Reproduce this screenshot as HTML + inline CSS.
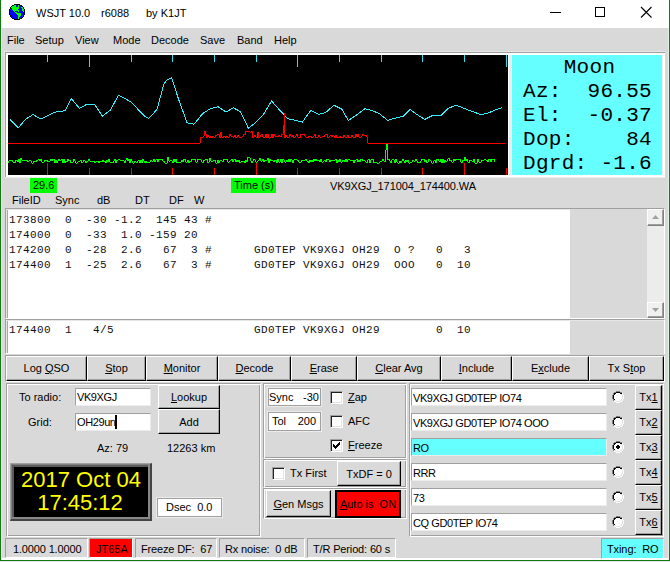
<!DOCTYPE html>
<html><head><meta charset="utf-8">
<style>
*{box-sizing:border-box;margin:0;padding:0}
html,body{width:670px;height:562px;overflow:hidden;background:#d9d9d9;font-family:"Liberation Sans",sans-serif;font-size:11px;color:#000}
.a{position:absolute}
.t{position:absolute;white-space:pre;line-height:11px;font-size:11px}
.m{position:absolute;white-space:pre;font-family:"Liberation Mono",monospace;font-size:11px;line-height:12px;letter-spacing:0.4px;color:#101010}
.sunk{position:absolute;background:#fff;border-top:1px solid #a0a0a0;border-left:1px solid #a0a0a0;border-right:1px solid #fff;border-bottom:1px solid #fff;box-shadow:inset 1px 1px 0 #e6e6e6, inset 2px 0 0 #a8a8a8}
.btn{position:absolute;background:#d9d9d9;border-top:1px solid #fff;border-left:1px solid #fff;border-right:1px solid #000;border-bottom:1px solid #000;box-shadow:inset -1px -1px 0 #a0a0a0;text-align:center;font-size:11px;white-space:pre}
.grp{position:absolute;border-top:1px solid #a0a0a0;border-left:1px solid #a0a0a0;border-right:1px solid #fff;border-bottom:1px solid #fff;box-shadow:inset 1px 1px 0 #fff,inset -1px -1px 0 #a0a0a0}
.edit{position:absolute;background:#fff;border-top:1px solid #a0a0a0;border-left:1px solid #a0a0a0;border-right:1px solid #ececec;border-bottom:1px solid #ececec;font-size:11px;white-space:pre}
.cb{position:absolute;width:13px;height:13px;background:#fff;border-top:1px solid #a0a0a0;border-left:1px solid #a0a0a0;border-right:1px solid #fff;border-bottom:1px solid #fff;box-shadow:inset 1px 1px 0 #202020, inset -1px -1px 0 #e3e3e3}
.rb{position:absolute;width:12px;height:12px;border-radius:50%;background:#fff;border:1px solid #808080;border-right-color:#fff;border-bottom-color:#fff}
.sp{position:absolute;height:20px;top:538px;border:1px solid #a0a0a0;border-right-color:#fff;border-bottom-color:#fff}
u{text-decoration:underline}
</style></head><body>
<!-- window border -->
<div class="a" style="left:0;top:0;width:1px;height:561px;background:#107c10"></div>
<div class="a" style="left:669px;top:0;width:1px;height:561px;background:#107c10"></div>
<div class="a" style="left:0;top:560px;width:670px;height:1px;background:#107c10"></div>
<div class="a" style="left:0;top:561px;width:670px;height:1px;background:#e4e4e4"></div>
<div class="a" style="left:1px;top:28px;width:1px;height:532px;background:#ebebeb"></div>
<div class="a" style="left:668px;top:28px;width:1px;height:532px;background:#ebebeb"></div>
<!-- title bar -->
<div class="a" style="left:1px;top:0;width:668px;height:28px;background:#fff"></div>
<svg class="a" style="left:9px;top:4px" width="16" height="16" shape-rendering="crispEdges"><rect x="5" y="0" width="1" height="1" fill="#000"/><rect x="6" y="0" width="1" height="1" fill="#000"/><rect x="7" y="0" width="1" height="1" fill="#000"/><rect x="8" y="0" width="1" height="1" fill="#000"/><rect x="9" y="0" width="1" height="1" fill="#000"/><rect x="10" y="0" width="1" height="1" fill="#000"/><rect x="3" y="1" width="1" height="1" fill="#000"/><rect x="4" y="1" width="1" height="1" fill="#000"/><rect x="5" y="1" width="1" height="1" fill="#00ff00"/><rect x="6" y="1" width="1" height="1" fill="#00ff00"/><rect x="7" y="1" width="1" height="1" fill="#0000ff"/><rect x="8" y="1" width="1" height="1" fill="#0000ff"/><rect x="9" y="1" width="1" height="1" fill="#00ff00"/><rect x="10" y="1" width="1" height="1" fill="#0000ff"/><rect x="11" y="1" width="1" height="1" fill="#000"/><rect x="12" y="1" width="1" height="1" fill="#000"/><rect x="2" y="2" width="1" height="1" fill="#000"/><rect x="3" y="2" width="1" height="1" fill="#00ff00"/><rect x="4" y="2" width="1" height="1" fill="#00ff00"/><rect x="5" y="2" width="1" height="1" fill="#00ff00"/><rect x="6" y="2" width="1" height="1" fill="#00ff00"/><rect x="7" y="2" width="1" height="1" fill="#0000ff"/><rect x="8" y="2" width="1" height="1" fill="#0000ff"/><rect x="9" y="2" width="1" height="1" fill="#00ff00"/><rect x="10" y="2" width="1" height="1" fill="#0000ff"/><rect x="11" y="2" width="1" height="1" fill="#0000ff"/><rect x="12" y="2" width="1" height="1" fill="#0000ff"/><rect x="13" y="2" width="1" height="1" fill="#000"/><rect x="1" y="3" width="1" height="1" fill="#000"/><rect x="2" y="3" width="1" height="1" fill="#00ff00"/><rect x="3" y="3" width="1" height="1" fill="#00ff00"/><rect x="4" y="3" width="1" height="1" fill="#00ff00"/><rect x="5" y="3" width="1" height="1" fill="#00ff00"/><rect x="6" y="3" width="1" height="1" fill="#00ff00"/><rect x="7" y="3" width="1" height="1" fill="#00ff00"/><rect x="8" y="3" width="1" height="1" fill="#00ff00"/><rect x="9" y="3" width="1" height="1" fill="#00ff00"/><rect x="10" y="3" width="1" height="1" fill="#0000ff"/><rect x="11" y="3" width="1" height="1" fill="#0000ff"/><rect x="12" y="3" width="1" height="1" fill="#00ff00"/><rect x="13" y="3" width="1" height="1" fill="#00ff00"/><rect x="14" y="3" width="1" height="1" fill="#000"/><rect x="1" y="4" width="1" height="1" fill="#000"/><rect x="2" y="4" width="1" height="1" fill="#0000ff"/><rect x="3" y="4" width="1" height="1" fill="#00ff00"/><rect x="4" y="4" width="1" height="1" fill="#00ff00"/><rect x="5" y="4" width="1" height="1" fill="#00ff00"/><rect x="6" y="4" width="1" height="1" fill="#00ff00"/><rect x="7" y="4" width="1" height="1" fill="#00ff00"/><rect x="8" y="4" width="1" height="1" fill="#00ff00"/><rect x="9" y="4" width="1" height="1" fill="#00ff00"/><rect x="10" y="4" width="1" height="1" fill="#0000ff"/><rect x="11" y="4" width="1" height="1" fill="#0000ff"/><rect x="12" y="4" width="1" height="1" fill="#0000ff"/><rect x="13" y="4" width="1" height="1" fill="#00ff00"/><rect x="14" y="4" width="1" height="1" fill="#000"/><rect x="0" y="5" width="1" height="1" fill="#000"/><rect x="1" y="5" width="1" height="1" fill="#0000ff"/><rect x="2" y="5" width="1" height="1" fill="#0000ff"/><rect x="3" y="5" width="1" height="1" fill="#00ff00"/><rect x="4" y="5" width="1" height="1" fill="#00ff00"/><rect x="5" y="5" width="1" height="1" fill="#00ff00"/><rect x="6" y="5" width="1" height="1" fill="#00ff00"/><rect x="7" y="5" width="1" height="1" fill="#00ff00"/><rect x="8" y="5" width="1" height="1" fill="#00ff00"/><rect x="9" y="5" width="1" height="1" fill="#0000ff"/><rect x="10" y="5" width="1" height="1" fill="#0000ff"/><rect x="11" y="5" width="1" height="1" fill="#0000ff"/><rect x="12" y="5" width="1" height="1" fill="#0000ff"/><rect x="13" y="5" width="1" height="1" fill="#00ff00"/><rect x="14" y="5" width="1" height="1" fill="#00ff00"/><rect x="15" y="5" width="1" height="1" fill="#000"/><rect x="0" y="6" width="1" height="1" fill="#000"/><rect x="1" y="6" width="1" height="1" fill="#0000ff"/><rect x="2" y="6" width="1" height="1" fill="#0000ff"/><rect x="3" y="6" width="1" height="1" fill="#0000ff"/><rect x="4" y="6" width="1" height="1" fill="#00ff00"/><rect x="5" y="6" width="1" height="1" fill="#00ff00"/><rect x="6" y="6" width="1" height="1" fill="#00ff00"/><rect x="7" y="6" width="1" height="1" fill="#00ff00"/><rect x="8" y="6" width="1" height="1" fill="#00ff00"/><rect x="9" y="6" width="1" height="1" fill="#00ff00"/><rect x="10" y="6" width="1" height="1" fill="#0000ff"/><rect x="11" y="6" width="1" height="1" fill="#0000ff"/><rect x="12" y="6" width="1" height="1" fill="#0000ff"/><rect x="13" y="6" width="1" height="1" fill="#00ff00"/><rect x="14" y="6" width="1" height="1" fill="#00ff00"/><rect x="15" y="6" width="1" height="1" fill="#000"/><rect x="0" y="7" width="1" height="1" fill="#000"/><rect x="1" y="7" width="1" height="1" fill="#0000ff"/><rect x="2" y="7" width="1" height="1" fill="#0000ff"/><rect x="3" y="7" width="1" height="1" fill="#0000ff"/><rect x="4" y="7" width="1" height="1" fill="#0000ff"/><rect x="5" y="7" width="1" height="1" fill="#00ff00"/><rect x="6" y="7" width="1" height="1" fill="#0000ff"/><rect x="7" y="7" width="1" height="1" fill="#0000ff"/><rect x="8" y="7" width="1" height="1" fill="#0000ff"/><rect x="9" y="7" width="1" height="1" fill="#00ff00"/><rect x="10" y="7" width="1" height="1" fill="#0000ff"/><rect x="11" y="7" width="1" height="1" fill="#0000ff"/><rect x="12" y="7" width="1" height="1" fill="#0000ff"/><rect x="13" y="7" width="1" height="1" fill="#0000ff"/><rect x="14" y="7" width="1" height="1" fill="#00ff00"/><rect x="15" y="7" width="1" height="1" fill="#000"/><rect x="0" y="8" width="1" height="1" fill="#000"/><rect x="1" y="8" width="1" height="1" fill="#0000ff"/><rect x="2" y="8" width="1" height="1" fill="#0000ff"/><rect x="3" y="8" width="1" height="1" fill="#0000ff"/><rect x="4" y="8" width="1" height="1" fill="#0000ff"/><rect x="5" y="8" width="1" height="1" fill="#0000ff"/><rect x="6" y="8" width="1" height="1" fill="#00ff00"/><rect x="7" y="8" width="1" height="1" fill="#00ff00"/><rect x="8" y="8" width="1" height="1" fill="#0000ff"/><rect x="9" y="8" width="1" height="1" fill="#0000ff"/><rect x="10" y="8" width="1" height="1" fill="#0000ff"/><rect x="11" y="8" width="1" height="1" fill="#0000ff"/><rect x="12" y="8" width="1" height="1" fill="#0000ff"/><rect x="13" y="8" width="1" height="1" fill="#0000ff"/><rect x="14" y="8" width="1" height="1" fill="#0000ff"/><rect x="15" y="8" width="1" height="1" fill="#000"/><rect x="0" y="9" width="1" height="1" fill="#000"/><rect x="1" y="9" width="1" height="1" fill="#0000ff"/><rect x="2" y="9" width="1" height="1" fill="#0000ff"/><rect x="3" y="9" width="1" height="1" fill="#0000ff"/><rect x="4" y="9" width="1" height="1" fill="#0000ff"/><rect x="5" y="9" width="1" height="1" fill="#0000ff"/><rect x="6" y="9" width="1" height="1" fill="#0000ff"/><rect x="7" y="9" width="1" height="1" fill="#00ff00"/><rect x="8" y="9" width="1" height="1" fill="#00ff00"/><rect x="9" y="9" width="1" height="1" fill="#00ff00"/><rect x="10" y="9" width="1" height="1" fill="#00ff00"/><rect x="11" y="9" width="1" height="1" fill="#00ff00"/><rect x="12" y="9" width="1" height="1" fill="#0000ff"/><rect x="13" y="9" width="1" height="1" fill="#0000ff"/><rect x="14" y="9" width="1" height="1" fill="#0000ff"/><rect x="15" y="9" width="1" height="1" fill="#000"/><rect x="0" y="10" width="1" height="1" fill="#000"/><rect x="1" y="10" width="1" height="1" fill="#0000ff"/><rect x="2" y="10" width="1" height="1" fill="#0000ff"/><rect x="3" y="10" width="1" height="1" fill="#0000ff"/><rect x="4" y="10" width="1" height="1" fill="#0000ff"/><rect x="5" y="10" width="1" height="1" fill="#0000ff"/><rect x="6" y="10" width="1" height="1" fill="#0000ff"/><rect x="7" y="10" width="1" height="1" fill="#0000ff"/><rect x="8" y="10" width="1" height="1" fill="#00ff00"/><rect x="9" y="10" width="1" height="1" fill="#00ff00"/><rect x="10" y="10" width="1" height="1" fill="#00ff00"/><rect x="11" y="10" width="1" height="1" fill="#00ff00"/><rect x="12" y="10" width="1" height="1" fill="#0000ff"/><rect x="13" y="10" width="1" height="1" fill="#0000ff"/><rect x="14" y="10" width="1" height="1" fill="#0000ff"/><rect x="15" y="10" width="1" height="1" fill="#000"/><rect x="1" y="11" width="1" height="1" fill="#000"/><rect x="2" y="11" width="1" height="1" fill="#0000ff"/><rect x="3" y="11" width="1" height="1" fill="#0000ff"/><rect x="4" y="11" width="1" height="1" fill="#0000ff"/><rect x="5" y="11" width="1" height="1" fill="#0000ff"/><rect x="6" y="11" width="1" height="1" fill="#0000ff"/><rect x="7" y="11" width="1" height="1" fill="#0000ff"/><rect x="8" y="11" width="1" height="1" fill="#0000ff"/><rect x="9" y="11" width="1" height="1" fill="#00ff00"/><rect x="10" y="11" width="1" height="1" fill="#00ff00"/><rect x="11" y="11" width="1" height="1" fill="#00ff00"/><rect x="12" y="11" width="1" height="1" fill="#0000ff"/><rect x="13" y="11" width="1" height="1" fill="#0000ff"/><rect x="14" y="11" width="1" height="1" fill="#000"/><rect x="1" y="12" width="1" height="1" fill="#000"/><rect x="2" y="12" width="1" height="1" fill="#0000ff"/><rect x="3" y="12" width="1" height="1" fill="#0000ff"/><rect x="4" y="12" width="1" height="1" fill="#0000ff"/><rect x="5" y="12" width="1" height="1" fill="#0000ff"/><rect x="6" y="12" width="1" height="1" fill="#0000ff"/><rect x="7" y="12" width="1" height="1" fill="#0000ff"/><rect x="8" y="12" width="1" height="1" fill="#0000ff"/><rect x="9" y="12" width="1" height="1" fill="#00ff00"/><rect x="10" y="12" width="1" height="1" fill="#00ff00"/><rect x="11" y="12" width="1" height="1" fill="#0000ff"/><rect x="12" y="12" width="1" height="1" fill="#0000ff"/><rect x="13" y="12" width="1" height="1" fill="#0000ff"/><rect x="14" y="12" width="1" height="1" fill="#000"/><rect x="2" y="13" width="1" height="1" fill="#000"/><rect x="3" y="13" width="1" height="1" fill="#0000ff"/><rect x="4" y="13" width="1" height="1" fill="#0000ff"/><rect x="5" y="13" width="1" height="1" fill="#0000ff"/><rect x="6" y="13" width="1" height="1" fill="#0000ff"/><rect x="7" y="13" width="1" height="1" fill="#0000ff"/><rect x="8" y="13" width="1" height="1" fill="#0000ff"/><rect x="9" y="13" width="1" height="1" fill="#00ff00"/><rect x="10" y="13" width="1" height="1" fill="#0000ff"/><rect x="11" y="13" width="1" height="1" fill="#0000ff"/><rect x="12" y="13" width="1" height="1" fill="#0000ff"/><rect x="13" y="13" width="1" height="1" fill="#000"/><rect x="3" y="14" width="1" height="1" fill="#000"/><rect x="4" y="14" width="1" height="1" fill="#000"/><rect x="5" y="14" width="1" height="1" fill="#0000ff"/><rect x="6" y="14" width="1" height="1" fill="#0000ff"/><rect x="7" y="14" width="1" height="1" fill="#0000ff"/><rect x="8" y="14" width="1" height="1" fill="#0000ff"/><rect x="9" y="14" width="1" height="1" fill="#00ff00"/><rect x="10" y="14" width="1" height="1" fill="#0000ff"/><rect x="11" y="14" width="1" height="1" fill="#000"/><rect x="12" y="14" width="1" height="1" fill="#000"/><rect x="5" y="15" width="1" height="1" fill="#000"/><rect x="6" y="15" width="1" height="1" fill="#000"/><rect x="7" y="15" width="1" height="1" fill="#000"/><rect x="8" y="15" width="1" height="1" fill="#000"/><rect x="9" y="15" width="1" height="1" fill="#000"/><rect x="10" y="15" width="1" height="1" fill="#000"/></svg>
<div class="t" style="left:36px;top:8px">WSJT 10.0</div>
<div class="t" style="left:101px;top:8px">r6088</div>
<div class="t" style="left:146px;top:8px">by K1JT</div>
<div class="a" style="left:550px;top:12px;width:11px;height:1px;background:#000"></div>
<div class="a" style="left:595px;top:7px;width:10px;height:10px;border:1px solid #000"></div>
<svg class="a" style="left:640px;top:6px" width="13" height="13"><path d="M1,1 L11.5,11.5 M11.5,1 L1,11.5" stroke="#000" stroke-width="1.1"/></svg>
<!-- menu -->
<div class="t" style="left:7px;top:35px">File</div>
<div class="t" style="left:35px;top:35px">Setup</div>
<div class="t" style="left:75px;top:35px">View</div>
<div class="t" style="left:113px;top:35px">Mode</div>
<div class="t" style="left:151px;top:35px">Decode</div>
<div class="t" style="left:200px;top:35px">Save</div>
<div class="t" style="left:237px;top:35px">Band</div>
<div class="t" style="left:274px;top:35px">Help</div>
<!-- plot frame -->
<div class="a" style="left:4px;top:51px;width:661px;height:1px;background:#e6e6e6"></div>
<div class="a" style="left:4px;top:51px;width:1px;height:126px;background:#e6e6e6"></div>
<div class="a" style="left:5px;top:52px;width:660px;height:125px;background:#fff;border-top:1px solid #a0a0a0;border-left:1px solid #a0a0a0"></div>
<div class="a" style="left:5px;top:177px;width:660px;height:1px;background:#ececec"></div>
<div class="a" style="left:8px;top:55px;width:500px;height:120px;background:#000"></div>
<div class="a" style="left:509px;top:55px;width:3px;height:120px;background:#ececec"></div>
<div class="a" style="left:512px;top:55px;width:150px;height:120px;background:#66ffff"></div>
<div class="a" style="left:662px;top:55px;width:1px;height:120px;background:#f0ecec"></div>
<svg class="a" style="left:0;top:0" width="670" height="180" shape-rendering="crispEdges">
<rect x="47" y="55" width="1" height="7" fill="#33e0f0"/><rect x="47" y="163" width="1" height="12" fill="#ff0000"/><rect x="89" y="55" width="1" height="12" fill="#33e0f0"/><rect x="89" y="168" width="1" height="7" fill="#ff0000"/><rect x="131" y="55" width="1" height="7" fill="#33e0f0"/><rect x="131" y="168" width="1" height="7" fill="#ff0000"/><rect x="172" y="55" width="1" height="7" fill="#33e0f0"/><rect x="172" y="168" width="1" height="7" fill="#ff0000"/><rect x="214" y="55" width="1" height="7" fill="#33e0f0"/><rect x="214" y="168" width="1" height="7" fill="#ff0000"/><rect x="256" y="55" width="1" height="7" fill="#33e0f0"/><rect x="256" y="163" width="1" height="12" fill="#ff0000"/><rect x="297" y="55" width="1" height="12" fill="#33e0f0"/><rect x="297" y="168" width="1" height="7" fill="#ff0000"/><rect x="339" y="55" width="1" height="7" fill="#33e0f0"/><rect x="339" y="168" width="1" height="7" fill="#ff0000"/><rect x="381" y="55" width="1" height="7" fill="#33e0f0"/><rect x="381" y="168" width="1" height="7" fill="#ff0000"/><rect x="422" y="55" width="1" height="7" fill="#33e0f0"/><rect x="422" y="168" width="1" height="7" fill="#ff0000"/><rect x="464" y="55" width="1" height="7" fill="#33e0f0"/><rect x="464" y="163" width="1" height="12" fill="#ff0000"/><rect x="506" y="55" width="1" height="12" fill="#33e0f0"/><rect x="506" y="168" width="1" height="7" fill="#ff0000"/>
<polyline points="10.1,119.5 18.4,127.8 25.2,119.5 33.0,114.6 41.1,119.1 52.4,113.1 57.2,111.7 65.0,110.7 71.4,98.7 79.5,108.4 86.3,104.5 94.7,104.5 102.4,116.2 110.6,109.8 118.4,95.2 125,98.4 131.8,102.7 138.6,110.0 144.4,115.9 148.7,118.6 157.0,109.5 163.8,84.3 166.7,80.4 171.6,77.5 178.4,98.8 187.2,122.9 194.0,124.3 202.7,113.6 210.4,108.7 218.2,106.8 226.0,112.0 233.3,107.8 240.5,111.6 248.3,128.1 255.0,123.3 262.8,115.5 271.6,101.0 278.4,108.7 287.8,118.8 294.6,120.2 302.3,122.1 310.7,110.5 318.8,114.3 325.6,112.6 333.9,105.2 341.7,109.1 348.3,120.4 356.6,114.9 365.0,108.7 370.8,110.1 379.0,113.4 387.7,120.4 396.4,117.8 402.9,116.5 410.1,109.5 417.5,114.9 424.8,119.4 433.0,115.3 441.1,115.3 448.5,108.1 456.3,105.2 466.9,109.5 480.5,114.5 487.3,113.4 495.0,110.1 501.9,107.6" fill="none" stroke="#33eef8" stroke-width="1"/>
<polyline points="8,143 200,143 201,137 202,137 203,137 204,136 205,131 206,134 207,138 208,135 209,137 210,138 211,136 212,138 213,136 214,137 215,137 216,135 217,135 218,134 219,135 220,138 221,132 222,137 223,138 224,136 225,137 226,138 227,136 228,137 229,137 230,134 231,136 232,136 233,137 234,137 235,135 236,138 237,137 238,135 239,137 240,137 241,137 242,137 243,136 244,134 245,135 246,131 247,131 248,132 249,131 250,132 251,132 252,131 253,138 254,137 255,135 256,137 257,138 258,132 259,138 260,137 261,135 262,134 263,137 264,137 265,137 266,134 267,138 268,134 269,138 270,138 271,137 272,134 273,138 274,134 275,136 276,136 277,136 278,137 279,135 280,136 281,137 282,134 283,134 284,125 284,113 284,130 285,138 286,135 287,137 288,137 289,137 290,134 291,136 292,137 293,135 294,138 295,137 296,136 297,134 298,137 299,137 300,138 301,134 302,134 303,134 304,134 305,136 306,137 307,137 308,138 309,136 310,136 311,136 312,138 313,137 314,136 315,134 316,138 317,137 318,137 319,135 320,137 321,138 322,137 323,136 324,137 325,135 326,134 327,134 328,138 329,137 330,136 331,135 332,137 333,135 334,136 335,138 336,135 337,138 338,137 339,137 340,136 341,138 342,137 343,138 344,135 345,137 346,138 347,137 348,135 349,138 350,137 351,137 352,135 353,137 354,137 355,138 356,134 357,137 358,134 359,137 360,137 361,137 362,136 363,134 364,135 365,136 366,135 367,137 368,143 505,143" fill="none" stroke="#ff0000" stroke-width="1"/>
<polyline points="8,163 9,161 10,160 11,160 12,160 13,162 14,162 15,163 16,160 17,160 18,162 19,159 20,163 21,158 22,160 23,160 24,161 25,160 26,160 27,160 28,162 29,161 30,160 31,161 32,163 33,163 34,161 35,161 36,162 37,160 38,160 39,159 40,161 41,159 42,162 43,163 44,162 45,160 46,160 47,160 48,162 49,161 50,161 51,159 52,161 53,159 54,159 55,163 56,160 57,163 58,161 59,159 60,161 61,160 62,159 63,163 64,159 65,163 66,161 67,162 68,159 69,161 70,160 71,163 72,162 73,162 74,159 75,161 76,163 77,163 78,162 79,161 80,161 81,160 82,163 83,162 84,160 85,161 86,163 87,161 88,161 89,159 90,161 91,161 92,161 93,161 94,161 95,163 96,162 97,161 98,161 99,163 100,161 101,161 102,162 103,160 104,162 105,161 106,163 107,160 108,162 109,159 110,162 111,163 112,162 113,163 114,161 115,159 116,163 117,160 118,160 119,159 120,160 121,160 122,160 123,160 124,161 125,163 126,160 127,158 128,161 129,159 130,163 131,159 132,161 133,163 134,163 135,161 136,162 137,163 138,161 139,160 140,163 141,160 142,163 143,159 144,161 145,163 146,161 147,163 148,162 149,162 150,162 151,160 152,161 153,161 154,159 155,162 156,160 157,159 158,162 159,159 160,159 161,160 162,159 163,161 164,161 165,163 166,163 167,163 168,157 169,161 170,161 171,160 172,161 173,163 174,159 175,162 176,159 177,163 178,162 179,162 180,162 181,162 182,160 183,162 184,159 185,159 186,162 187,162 188,160 189,163 190,161 191,162 192,159 193,160 194,159 195,159 196,162 197,162 198,159 199,159 200,159 201,160 202,162 203,163 204,160 205,160 206,159 207,159 208,163 209,162 210,158 211,161 212,162 213,161 214,160 215,160 216,163 217,163 218,160 219,163 220,161 221,160 222,161 223,162 224,159 225,159 226,159 227,159 228,162 229,162 230,161 231,160 232,159 233,162 234,160 235,159 236,162 237,160 238,162 239,160 240,163 241,162 242,161 243,162 244,161 245,163 246,160 247,162 248,157 249,157 250,158 251,161 252,163 253,161 254,159 255,160 256,162 257,162 258,161 259,160 260,158 261,161 262,161 263,159 264,162 265,160 266,161 267,160 268,158 269,163 270,159 271,161 272,160 273,161 274,162 275,160 276,160 277,163 278,159 279,162 280,162 281,159 282,163 283,159 284,160 285,162 286,162 287,160 288,162 289,159 290,162 291,159 292,160 293,163 294,160 295,159 296,159 297,160 298,160 299,162 300,162 301,162 302,160 303,161 304,160 305,160 306,159 307,161 308,161 309,163 310,160 311,162 312,160 313,162 314,159 315,161 316,159 317,161 318,160 319,160 320,162 321,159 322,162 323,162 324,161 325,160 326,162 327,159 328,159 329,160 330,162 331,160 332,160 333,161 334,160 335,160 336,159 337,163 338,160 339,162 340,159 341,162 342,162 343,160 344,160 345,162 346,159 347,162 348,160 349,159 350,160 351,161 352,160 353,160 354,163 355,160 356,160 357,159 358,162 359,160 360,162 361,159 362,159 363,161 364,160 365,161 366,162 367,163 368,160 369,159 370,163 371,160 372,159 373,159 374,163 375,162 376,162 377,163 378,163 379,163 380,162 381,161 382,161 383,159 384,161 385,162 386,150 386,144 387,144 387,158 387,159 388,160 389,159 390,161 391,163 392,160 393,159 394,160 395,163 396,159 397,162 398,163 399,163 400,161 401,163 402,161 403,159 404,161 405,163 406,160 407,162 408,160 409,163 410,163 411,162 412,162 413,160 414,161 415,161 416,159 417,161 418,163 419,162 420,163 421,161 422,159 423,160 424,159 425,162 426,160 427,163 428,162 429,159 430,160 431,161 432,163 433,163 434,161 435,160 436,163 437,159 438,159 439,161 440,162 441,159 442,163 443,159 444,163 445,160 446,162 447,161 448,159 449,158 450,161 451,160 452,162 453,162 454,159 455,161 456,159 457,159 458,160 459,159 460,159 461,162 462,163 463,160 464,161 465,157 466,161 467,159 468,162 469,163 470,160 471,160 472,161 473,162 474,159 475,163 476,163 477,163 478,159 479,162 480,162 481,162 482,160 483,161 484,160 485,159 486,160 487,160 488,162 489,159 490,159 491,162 492,159 493,160 494,159 495,162" fill="none" stroke="#00ff00" stroke-width="1"/>
</svg>
<!-- moon -->
<div class="a" style="left:512px;top:55px;width:150px;height:120px;font-family:'Liberation Mono',monospace;font-size:21px;line-height:24px;white-space:pre;color:#000;letter-spacing:0.3px">
<div class="a" style="left:13px;top:1px">   Moon</div>
<div class="a" style="left:11px;top:25px">Az:  96.55</div>
<div class="a" style="left:11px;top:49px">El:  -0.37</div>
<div class="a" style="left:11px;top:73px">Dop:    84</div>
<div class="a" style="left:11px;top:97px">Dgrd: -1.6</div>
</div>
<!-- labels -->
<div class="a" style="left:30px;top:178px;width:27px;height:15px;background:#00ff00"></div>
<div class="t" style="left:33px;top:180px">29.6</div>
<div class="a" style="left:231px;top:178px;width:45px;height:15px;background:#00ff00"></div>
<div class="t" style="left:234px;top:180px">Time (s)</div>
<div class="t" style="left:330px;top:181px;letter-spacing:-0.1px">VK9XGJ_171004_174400.WA</div>
<div class="t" style="left:12px;top:195px">FileID</div>
<div class="t" style="left:55px;top:195px">Sync</div>
<div class="t" style="left:97px;top:195px">dB</div>
<div class="t" style="left:135px;top:195px">DT</div>
<div class="t" style="left:169px;top:195px">DF</div>
<div class="t" style="left:194px;top:195px">W</div>
<!-- decoded text -->
<div class="sunk" style="left:5px;top:208px;width:660px;height:111px"></div>
<div class="a" style="left:570px;top:209px;width:77px;height:109px;background:#d9d9d9"></div>
<div class="a" style="left:647px;top:210px;width:17px;height:107px;background:#ececec"></div>
<div class="a" style="left:647px;top:209px;width:17px;height:17px;background:#f0f0f0;border-top:1px solid #fff;border-left:1px solid #fff;border-right:1px solid #808080;border-bottom:1px solid #808080;box-shadow:inset -1px -1px 0 #a0a0a0"></div>
<div class="a" style="left:647px;top:302px;width:17px;height:16px;background:#f0f0f0;border-top:1px solid #fff;border-left:1px solid #fff;border-right:1px solid #808080;border-bottom:1px solid #808080;box-shadow:inset -1px -1px 0 #a0a0a0"></div>
<svg class="a" style="left:647px;top:209px" width="17" height="109"><path d="M5,10 L8.5,6 L12,10Z" fill="#a0a0a0"/><path d="M5,99 L8.5,103 L12,99Z" fill="#a0a0a0"/></svg>
<div class="m" style="left:9px;top:214px">173800  0  -30 -1.2  145 43 #</div>
<div class="m" style="left:9px;top:229px">174000  0  -33  1.0 -159 20</div>
<div class="m" style="left:9px;top:244px">174200  0  -28  2.6   67  3 #      GD0TEP VK9XGJ OH29  O ?   0   3</div>
<div class="m" style="left:9px;top:259px">174400  1  -25  2.6   67  3 #      GD0TEP VK9XGJ OH29  OOO   0  10</div>
<!-- avg text -->
<div class="sunk" style="left:5px;top:319px;width:660px;height:35px"></div>
<div class="a" style="left:570px;top:321px;width:94px;height:33px;background:#d9d9d9"></div>
<div class="m" style="left:9px;top:324px">174400  1   4/5                    GD0TEP VK9XGJ OH29        0  10</div>
<!-- buttons -->
<div class="a" style="left:5px;top:355px;width:660px;height:27px;border-top:1px solid #a0a0a0;border-left:1px solid #a0a0a0;border-right:1px solid #fff;border-bottom:1px solid #fff"></div>
<div class="btn" style="left:6px;top:356px;width:81px;height:25px;line-height:22px">Log <u>Q</u>SO</div>
<div class="btn" style="left:87px;top:356px;width:59px;height:25px;line-height:22px"><u>S</u>top</div>
<div class="btn" style="left:146px;top:356px;width:72px;height:25px;line-height:22px"><u>M</u>onitor</div>
<div class="btn" style="left:218px;top:356px;width:73px;height:25px;line-height:22px"><u>D</u>ecode</div>
<div class="btn" style="left:291px;top:356px;width:66px;height:25px;line-height:22px"><u>E</u>rase</div>
<div class="btn" style="left:357px;top:356px;width:84px;height:25px;line-height:22px"><u>C</u>lear Avg</div>
<div class="btn" style="left:441px;top:356px;width:71px;height:25px;line-height:22px"><u>I</u>nclude</div>
<div class="btn" style="left:512px;top:356px;width:77px;height:25px;line-height:22px">E<u>x</u>clude</div>
<div class="btn" style="left:589px;top:356px;width:75px;height:25px;line-height:22px">Tx S<u>t</u>op</div>
<!-- left group -->
<div class="grp" style="left:6px;top:383px;width:255px;height:154px"></div>
<div class="t" style="left:19px;top:392px">To radio:</div>
<div class="edit" style="left:75px;top:388px;width:76px;height:18px;padding:2px 0 0 1px;letter-spacing:-0.4px">VK9XGJ</div>
<div class="btn" style="left:158px;top:385px;width:62px;height:24px;line-height:23px"><u>L</u>ookup</div>
<div class="t" style="left:28px;top:417px">Grid:</div>
<div class="edit" style="left:75px;top:413px;width:76px;height:18px;padding:2px 0 0 1px;letter-spacing:-0.4px">OH29un</div><div class="a" style="left:115px;top:415px;width:2px;height:14px;background:#000"></div>
<div class="btn" style="left:158px;top:409px;width:62px;height:25px;line-height:24px">Add</div>
<div class="t" style="left:97px;top:443px">Az: 79</div>
<div class="t" style="left:167px;top:443px">12263 km</div>
<div class="a" style="left:10px;top:463px;width:142px;height:58px;border-top:1px solid #a0a0a0;border-left:1px solid #a0a0a0;border-right:2px solid #444;border-bottom:2px solid #444"></div>
<div class="a" style="left:11px;top:464px;width:139px;height:55px;border-top:1px solid #808080;border-left:1px solid #808080;border-right:2px solid #888;border-bottom:2px solid #888"></div>
<div class="a" style="left:12px;top:465px;width:136px;height:52px;border-top:2px solid #5a5a5a;border-left:2px solid #5a5a5a;background:#000"></div>
<div class="a" style="left:14px;top:467px;width:134px;height:50px;color:#ffff00;font-size:22px;line-height:22px;text-align:center;white-space:pre;overflow:hidden"><div class="a" style="left:0;top:2px;width:134px">2017 Oct 04</div><div class="a" style="left:-1px;top:25px;width:134px">17:45:12</div></div>
<div class="a" style="left:157px;top:498px;width:65px;height:19px;background:#fff;border:1px solid #a0a0a0;box-shadow:0 0 0 1px #ececec"></div><div class="t" style="left:166px;top:502px">Dsec  0.0</div>
<!-- middle groups -->
<div class="grp" style="left:263px;top:383px;width:144px;height:76px"></div>
<div class="a" style="left:268px;top:388px;width:53px;height:18px;background:#fff;border:1px solid #a0a0a0;box-shadow:0 0 0 1px #ececec"></div>
<div class="t" style="left:269px;top:392px">Sync</div><div class="t" style="left:288px;top:392px;width:31px;text-align:right">-30</div>
<div class="a" style="left:268px;top:412px;width:53px;height:19px;background:#fff;border:1px solid #a0a0a0;box-shadow:0 0 0 1px #ececec"></div>
<div class="t" style="left:272px;top:416px">Tol</div><div class="t" style="left:285px;top:416px;width:31px;text-align:right">200</div>
<div class="cb" style="left:330px;top:391px"></div><div class="t" style="left:348px;top:392px"><u>Z</u>ap</div>
<div class="cb" style="left:330px;top:415px"></div><div class="t" style="left:348px;top:416px">AFC</div>
<div class="cb" style="left:330px;top:439px"></div><div class="t" style="left:348px;top:440px"><u>F</u>reeze</div>
<svg class="a" style="left:333px;top:442px" width="7" height="7" shape-rendering="crispEdges"><rect x="6" y="0" width="1" height="1"/><rect x="5" y="1" width="1" height="1"/><rect x="6" y="1" width="1" height="1"/><rect x="0" y="2" width="1" height="1"/><rect x="4" y="2" width="1" height="1"/><rect x="5" y="2" width="1" height="1"/><rect x="6" y="2" width="1" height="1"/><rect x="0" y="3" width="1" height="1"/><rect x="1" y="3" width="1" height="1"/><rect x="3" y="3" width="1" height="1"/><rect x="4" y="3" width="1" height="1"/><rect x="5" y="3" width="1" height="1"/><rect x="0" y="4" width="1" height="1"/><rect x="1" y="4" width="1" height="1"/><rect x="2" y="4" width="1" height="1"/><rect x="3" y="4" width="1" height="1"/><rect x="4" y="4" width="1" height="1"/><rect x="1" y="5" width="1" height="1"/><rect x="2" y="5" width="1" height="1"/><rect x="3" y="5" width="1" height="1"/><rect x="2" y="6" width="1" height="1"/></svg>
<div class="grp" style="left:263px;top:459px;width:144px;height:29px"></div>
<div class="cb" style="left:272px;top:467px"></div><div class="t" style="left:290px;top:468px">Tx First</div>
<div class="btn" style="left:337px;top:461px;width:64px;height:25px;line-height:24px">TxDF = 0</div>
<div class="grp" style="left:263px;top:488px;width:144px;height:31px"></div>
<div class="btn" style="left:266px;top:490px;width:65px;height:27px;line-height:26px"><u>G</u>en Msgs</div>
<div class="a" style="left:335px;top:490px;width:66px;height:28px;background:#ff0000;border:2px solid #000;text-align:center;line-height:25px;white-space:pre"><u>A</u>uto is  ON</div>
<!-- right group -->
<div class="grp" style="left:409px;top:383px;width:255px;height:154px"></div>
<div class="edit" style="left:411px;top:388px;width:196px;height:18px;line-height:16px;padding:1px 0 0 1px;letter-spacing:-0.42px;background:#fff">VK9XGJ GD0TEP IO74</div>
<svg class="a" style="left:612px;top:391px" width="12" height="12" shape-rendering="crispEdges"><rect x="4" y="0" width="4" height="1" fill="#808080"/><rect x="2" y="1" width="2" height="1" fill="#808080"/><rect x="4" y="1" width="4" height="1" fill="#000"/><rect x="8" y="1" width="2" height="1" fill="#808080"/><rect x="1" y="2" width="1" height="1" fill="#808080"/><rect x="2" y="2" width="2" height="1" fill="#000"/><rect x="4" y="2" width="4" height="1" fill="#fff"/><rect x="8" y="2" width="2" height="1" fill="#000"/><rect x="10" y="2" width="1" height="1" fill="#fff"/><rect x="1" y="3" width="1" height="1" fill="#808080"/><rect x="2" y="3" width="1" height="1" fill="#000"/><rect x="3" y="3" width="6" height="1" fill="#fff"/><rect x="9" y="3" width="1" height="1" fill="#e3e3e3"/><rect x="10" y="3" width="1" height="1" fill="#fff"/><rect x="0" y="4" width="1" height="1" fill="#808080"/><rect x="1" y="4" width="1" height="1" fill="#000"/><rect x="2" y="4" width="8" height="1" fill="#fff"/><rect x="10" y="4" width="1" height="1" fill="#e3e3e3"/><rect x="11" y="4" width="1" height="1" fill="#fff"/><rect x="0" y="5" width="1" height="1" fill="#808080"/><rect x="1" y="5" width="1" height="1" fill="#000"/><rect x="2" y="5" width="8" height="1" fill="#fff"/><rect x="10" y="5" width="1" height="1" fill="#e3e3e3"/><rect x="11" y="5" width="1" height="1" fill="#fff"/><rect x="0" y="6" width="1" height="1" fill="#808080"/><rect x="1" y="6" width="1" height="1" fill="#000"/><rect x="2" y="6" width="8" height="1" fill="#fff"/><rect x="10" y="6" width="1" height="1" fill="#e3e3e3"/><rect x="11" y="6" width="1" height="1" fill="#fff"/><rect x="0" y="7" width="1" height="1" fill="#808080"/><rect x="1" y="7" width="1" height="1" fill="#000"/><rect x="2" y="7" width="8" height="1" fill="#fff"/><rect x="10" y="7" width="1" height="1" fill="#e3e3e3"/><rect x="11" y="7" width="1" height="1" fill="#fff"/><rect x="1" y="8" width="1" height="1" fill="#808080"/><rect x="2" y="8" width="1" height="1" fill="#000"/><rect x="3" y="8" width="6" height="1" fill="#fff"/><rect x="9" y="8" width="1" height="1" fill="#e3e3e3"/><rect x="10" y="8" width="1" height="1" fill="#fff"/><rect x="1" y="9" width="1" height="1" fill="#808080"/><rect x="2" y="9" width="2" height="1" fill="#e3e3e3"/><rect x="4" y="9" width="4" height="1" fill="#fff"/><rect x="8" y="9" width="2" height="1" fill="#e3e3e3"/><rect x="10" y="9" width="1" height="1" fill="#fff"/><rect x="2" y="10" width="2" height="1" fill="#fff"/><rect x="4" y="10" width="4" height="1" fill="#e3e3e3"/><rect x="8" y="10" width="2" height="1" fill="#fff"/><rect x="4" y="11" width="4" height="1" fill="#fff"/></svg>
<div class="btn" style="left:635px;top:385px;width:27px;height:25px;line-height:22px">Tx<u>1</u></div>
<div class="edit" style="left:411px;top:413px;width:196px;height:18px;line-height:16px;padding:1px 0 0 1px;letter-spacing:-0.42px;background:#fff">VK9XGJ GD0TEP IO74 OOO</div>
<svg class="a" style="left:612px;top:416px" width="12" height="12" shape-rendering="crispEdges"><rect x="4" y="0" width="4" height="1" fill="#808080"/><rect x="2" y="1" width="2" height="1" fill="#808080"/><rect x="4" y="1" width="4" height="1" fill="#000"/><rect x="8" y="1" width="2" height="1" fill="#808080"/><rect x="1" y="2" width="1" height="1" fill="#808080"/><rect x="2" y="2" width="2" height="1" fill="#000"/><rect x="4" y="2" width="4" height="1" fill="#fff"/><rect x="8" y="2" width="2" height="1" fill="#000"/><rect x="10" y="2" width="1" height="1" fill="#fff"/><rect x="1" y="3" width="1" height="1" fill="#808080"/><rect x="2" y="3" width="1" height="1" fill="#000"/><rect x="3" y="3" width="6" height="1" fill="#fff"/><rect x="9" y="3" width="1" height="1" fill="#e3e3e3"/><rect x="10" y="3" width="1" height="1" fill="#fff"/><rect x="0" y="4" width="1" height="1" fill="#808080"/><rect x="1" y="4" width="1" height="1" fill="#000"/><rect x="2" y="4" width="8" height="1" fill="#fff"/><rect x="10" y="4" width="1" height="1" fill="#e3e3e3"/><rect x="11" y="4" width="1" height="1" fill="#fff"/><rect x="0" y="5" width="1" height="1" fill="#808080"/><rect x="1" y="5" width="1" height="1" fill="#000"/><rect x="2" y="5" width="8" height="1" fill="#fff"/><rect x="10" y="5" width="1" height="1" fill="#e3e3e3"/><rect x="11" y="5" width="1" height="1" fill="#fff"/><rect x="0" y="6" width="1" height="1" fill="#808080"/><rect x="1" y="6" width="1" height="1" fill="#000"/><rect x="2" y="6" width="8" height="1" fill="#fff"/><rect x="10" y="6" width="1" height="1" fill="#e3e3e3"/><rect x="11" y="6" width="1" height="1" fill="#fff"/><rect x="0" y="7" width="1" height="1" fill="#808080"/><rect x="1" y="7" width="1" height="1" fill="#000"/><rect x="2" y="7" width="8" height="1" fill="#fff"/><rect x="10" y="7" width="1" height="1" fill="#e3e3e3"/><rect x="11" y="7" width="1" height="1" fill="#fff"/><rect x="1" y="8" width="1" height="1" fill="#808080"/><rect x="2" y="8" width="1" height="1" fill="#000"/><rect x="3" y="8" width="6" height="1" fill="#fff"/><rect x="9" y="8" width="1" height="1" fill="#e3e3e3"/><rect x="10" y="8" width="1" height="1" fill="#fff"/><rect x="1" y="9" width="1" height="1" fill="#808080"/><rect x="2" y="9" width="2" height="1" fill="#e3e3e3"/><rect x="4" y="9" width="4" height="1" fill="#fff"/><rect x="8" y="9" width="2" height="1" fill="#e3e3e3"/><rect x="10" y="9" width="1" height="1" fill="#fff"/><rect x="2" y="10" width="2" height="1" fill="#fff"/><rect x="4" y="10" width="4" height="1" fill="#e3e3e3"/><rect x="8" y="10" width="2" height="1" fill="#fff"/><rect x="4" y="11" width="4" height="1" fill="#fff"/></svg>
<div class="btn" style="left:635px;top:410px;width:27px;height:25px;line-height:22px">Tx<u>2</u></div>
<div class="edit" style="left:411px;top:438px;width:196px;height:18px;line-height:16px;padding:1px 0 0 1px;letter-spacing:-0.42px;background:#66ffff">RO</div>
<svg class="a" style="left:612px;top:441px" width="12" height="12" shape-rendering="crispEdges"><rect x="4" y="0" width="4" height="1" fill="#808080"/><rect x="2" y="1" width="2" height="1" fill="#808080"/><rect x="4" y="1" width="4" height="1" fill="#000"/><rect x="8" y="1" width="2" height="1" fill="#808080"/><rect x="1" y="2" width="1" height="1" fill="#808080"/><rect x="2" y="2" width="2" height="1" fill="#000"/><rect x="4" y="2" width="4" height="1" fill="#fff"/><rect x="8" y="2" width="2" height="1" fill="#000"/><rect x="10" y="2" width="1" height="1" fill="#fff"/><rect x="1" y="3" width="1" height="1" fill="#808080"/><rect x="2" y="3" width="1" height="1" fill="#000"/><rect x="3" y="3" width="6" height="1" fill="#fff"/><rect x="9" y="3" width="1" height="1" fill="#e3e3e3"/><rect x="10" y="3" width="1" height="1" fill="#fff"/><rect x="0" y="4" width="1" height="1" fill="#808080"/><rect x="1" y="4" width="1" height="1" fill="#000"/><rect x="2" y="4" width="8" height="1" fill="#fff"/><rect x="10" y="4" width="1" height="1" fill="#e3e3e3"/><rect x="11" y="4" width="1" height="1" fill="#fff"/><rect x="0" y="5" width="1" height="1" fill="#808080"/><rect x="1" y="5" width="1" height="1" fill="#000"/><rect x="2" y="5" width="8" height="1" fill="#fff"/><rect x="10" y="5" width="1" height="1" fill="#e3e3e3"/><rect x="11" y="5" width="1" height="1" fill="#fff"/><rect x="0" y="6" width="1" height="1" fill="#808080"/><rect x="1" y="6" width="1" height="1" fill="#000"/><rect x="2" y="6" width="8" height="1" fill="#fff"/><rect x="10" y="6" width="1" height="1" fill="#e3e3e3"/><rect x="11" y="6" width="1" height="1" fill="#fff"/><rect x="0" y="7" width="1" height="1" fill="#808080"/><rect x="1" y="7" width="1" height="1" fill="#000"/><rect x="2" y="7" width="8" height="1" fill="#fff"/><rect x="10" y="7" width="1" height="1" fill="#e3e3e3"/><rect x="11" y="7" width="1" height="1" fill="#fff"/><rect x="1" y="8" width="1" height="1" fill="#808080"/><rect x="2" y="8" width="1" height="1" fill="#000"/><rect x="3" y="8" width="6" height="1" fill="#fff"/><rect x="9" y="8" width="1" height="1" fill="#e3e3e3"/><rect x="10" y="8" width="1" height="1" fill="#fff"/><rect x="1" y="9" width="1" height="1" fill="#808080"/><rect x="2" y="9" width="2" height="1" fill="#e3e3e3"/><rect x="4" y="9" width="4" height="1" fill="#fff"/><rect x="8" y="9" width="2" height="1" fill="#e3e3e3"/><rect x="10" y="9" width="1" height="1" fill="#fff"/><rect x="2" y="10" width="2" height="1" fill="#fff"/><rect x="4" y="10" width="4" height="1" fill="#e3e3e3"/><rect x="8" y="10" width="2" height="1" fill="#fff"/><rect x="4" y="11" width="4" height="1" fill="#fff"/><rect x="5" y="4" width="2" height="4" fill="#000"/><rect x="4" y="5" width="4" height="2" fill="#000"/></svg>
<div class="btn" style="left:635px;top:435px;width:27px;height:25px;line-height:22px">Tx<u>3</u></div>
<div class="edit" style="left:411px;top:463px;width:196px;height:18px;line-height:16px;padding:1px 0 0 1px;letter-spacing:-0.42px;background:#fff">RRR</div>
<svg class="a" style="left:612px;top:466px" width="12" height="12" shape-rendering="crispEdges"><rect x="4" y="0" width="4" height="1" fill="#808080"/><rect x="2" y="1" width="2" height="1" fill="#808080"/><rect x="4" y="1" width="4" height="1" fill="#000"/><rect x="8" y="1" width="2" height="1" fill="#808080"/><rect x="1" y="2" width="1" height="1" fill="#808080"/><rect x="2" y="2" width="2" height="1" fill="#000"/><rect x="4" y="2" width="4" height="1" fill="#fff"/><rect x="8" y="2" width="2" height="1" fill="#000"/><rect x="10" y="2" width="1" height="1" fill="#fff"/><rect x="1" y="3" width="1" height="1" fill="#808080"/><rect x="2" y="3" width="1" height="1" fill="#000"/><rect x="3" y="3" width="6" height="1" fill="#fff"/><rect x="9" y="3" width="1" height="1" fill="#e3e3e3"/><rect x="10" y="3" width="1" height="1" fill="#fff"/><rect x="0" y="4" width="1" height="1" fill="#808080"/><rect x="1" y="4" width="1" height="1" fill="#000"/><rect x="2" y="4" width="8" height="1" fill="#fff"/><rect x="10" y="4" width="1" height="1" fill="#e3e3e3"/><rect x="11" y="4" width="1" height="1" fill="#fff"/><rect x="0" y="5" width="1" height="1" fill="#808080"/><rect x="1" y="5" width="1" height="1" fill="#000"/><rect x="2" y="5" width="8" height="1" fill="#fff"/><rect x="10" y="5" width="1" height="1" fill="#e3e3e3"/><rect x="11" y="5" width="1" height="1" fill="#fff"/><rect x="0" y="6" width="1" height="1" fill="#808080"/><rect x="1" y="6" width="1" height="1" fill="#000"/><rect x="2" y="6" width="8" height="1" fill="#fff"/><rect x="10" y="6" width="1" height="1" fill="#e3e3e3"/><rect x="11" y="6" width="1" height="1" fill="#fff"/><rect x="0" y="7" width="1" height="1" fill="#808080"/><rect x="1" y="7" width="1" height="1" fill="#000"/><rect x="2" y="7" width="8" height="1" fill="#fff"/><rect x="10" y="7" width="1" height="1" fill="#e3e3e3"/><rect x="11" y="7" width="1" height="1" fill="#fff"/><rect x="1" y="8" width="1" height="1" fill="#808080"/><rect x="2" y="8" width="1" height="1" fill="#000"/><rect x="3" y="8" width="6" height="1" fill="#fff"/><rect x="9" y="8" width="1" height="1" fill="#e3e3e3"/><rect x="10" y="8" width="1" height="1" fill="#fff"/><rect x="1" y="9" width="1" height="1" fill="#808080"/><rect x="2" y="9" width="2" height="1" fill="#e3e3e3"/><rect x="4" y="9" width="4" height="1" fill="#fff"/><rect x="8" y="9" width="2" height="1" fill="#e3e3e3"/><rect x="10" y="9" width="1" height="1" fill="#fff"/><rect x="2" y="10" width="2" height="1" fill="#fff"/><rect x="4" y="10" width="4" height="1" fill="#e3e3e3"/><rect x="8" y="10" width="2" height="1" fill="#fff"/><rect x="4" y="11" width="4" height="1" fill="#fff"/></svg>
<div class="btn" style="left:635px;top:460px;width:27px;height:25px;line-height:22px">Tx<u>4</u></div>
<div class="edit" style="left:411px;top:488px;width:196px;height:18px;line-height:16px;padding:1px 0 0 1px;letter-spacing:-0.42px;background:#fff">73</div>
<svg class="a" style="left:612px;top:491px" width="12" height="12" shape-rendering="crispEdges"><rect x="4" y="0" width="4" height="1" fill="#808080"/><rect x="2" y="1" width="2" height="1" fill="#808080"/><rect x="4" y="1" width="4" height="1" fill="#000"/><rect x="8" y="1" width="2" height="1" fill="#808080"/><rect x="1" y="2" width="1" height="1" fill="#808080"/><rect x="2" y="2" width="2" height="1" fill="#000"/><rect x="4" y="2" width="4" height="1" fill="#fff"/><rect x="8" y="2" width="2" height="1" fill="#000"/><rect x="10" y="2" width="1" height="1" fill="#fff"/><rect x="1" y="3" width="1" height="1" fill="#808080"/><rect x="2" y="3" width="1" height="1" fill="#000"/><rect x="3" y="3" width="6" height="1" fill="#fff"/><rect x="9" y="3" width="1" height="1" fill="#e3e3e3"/><rect x="10" y="3" width="1" height="1" fill="#fff"/><rect x="0" y="4" width="1" height="1" fill="#808080"/><rect x="1" y="4" width="1" height="1" fill="#000"/><rect x="2" y="4" width="8" height="1" fill="#fff"/><rect x="10" y="4" width="1" height="1" fill="#e3e3e3"/><rect x="11" y="4" width="1" height="1" fill="#fff"/><rect x="0" y="5" width="1" height="1" fill="#808080"/><rect x="1" y="5" width="1" height="1" fill="#000"/><rect x="2" y="5" width="8" height="1" fill="#fff"/><rect x="10" y="5" width="1" height="1" fill="#e3e3e3"/><rect x="11" y="5" width="1" height="1" fill="#fff"/><rect x="0" y="6" width="1" height="1" fill="#808080"/><rect x="1" y="6" width="1" height="1" fill="#000"/><rect x="2" y="6" width="8" height="1" fill="#fff"/><rect x="10" y="6" width="1" height="1" fill="#e3e3e3"/><rect x="11" y="6" width="1" height="1" fill="#fff"/><rect x="0" y="7" width="1" height="1" fill="#808080"/><rect x="1" y="7" width="1" height="1" fill="#000"/><rect x="2" y="7" width="8" height="1" fill="#fff"/><rect x="10" y="7" width="1" height="1" fill="#e3e3e3"/><rect x="11" y="7" width="1" height="1" fill="#fff"/><rect x="1" y="8" width="1" height="1" fill="#808080"/><rect x="2" y="8" width="1" height="1" fill="#000"/><rect x="3" y="8" width="6" height="1" fill="#fff"/><rect x="9" y="8" width="1" height="1" fill="#e3e3e3"/><rect x="10" y="8" width="1" height="1" fill="#fff"/><rect x="1" y="9" width="1" height="1" fill="#808080"/><rect x="2" y="9" width="2" height="1" fill="#e3e3e3"/><rect x="4" y="9" width="4" height="1" fill="#fff"/><rect x="8" y="9" width="2" height="1" fill="#e3e3e3"/><rect x="10" y="9" width="1" height="1" fill="#fff"/><rect x="2" y="10" width="2" height="1" fill="#fff"/><rect x="4" y="10" width="4" height="1" fill="#e3e3e3"/><rect x="8" y="10" width="2" height="1" fill="#fff"/><rect x="4" y="11" width="4" height="1" fill="#fff"/></svg>
<div class="btn" style="left:635px;top:485px;width:27px;height:25px;line-height:22px">Tx<u>5</u></div>
<div class="edit" style="left:411px;top:513px;width:196px;height:18px;line-height:16px;padding:1px 0 0 1px;letter-spacing:-0.42px;background:#fff">CQ GD0TEP IO74</div>
<svg class="a" style="left:612px;top:516px" width="12" height="12" shape-rendering="crispEdges"><rect x="4" y="0" width="4" height="1" fill="#808080"/><rect x="2" y="1" width="2" height="1" fill="#808080"/><rect x="4" y="1" width="4" height="1" fill="#000"/><rect x="8" y="1" width="2" height="1" fill="#808080"/><rect x="1" y="2" width="1" height="1" fill="#808080"/><rect x="2" y="2" width="2" height="1" fill="#000"/><rect x="4" y="2" width="4" height="1" fill="#fff"/><rect x="8" y="2" width="2" height="1" fill="#000"/><rect x="10" y="2" width="1" height="1" fill="#fff"/><rect x="1" y="3" width="1" height="1" fill="#808080"/><rect x="2" y="3" width="1" height="1" fill="#000"/><rect x="3" y="3" width="6" height="1" fill="#fff"/><rect x="9" y="3" width="1" height="1" fill="#e3e3e3"/><rect x="10" y="3" width="1" height="1" fill="#fff"/><rect x="0" y="4" width="1" height="1" fill="#808080"/><rect x="1" y="4" width="1" height="1" fill="#000"/><rect x="2" y="4" width="8" height="1" fill="#fff"/><rect x="10" y="4" width="1" height="1" fill="#e3e3e3"/><rect x="11" y="4" width="1" height="1" fill="#fff"/><rect x="0" y="5" width="1" height="1" fill="#808080"/><rect x="1" y="5" width="1" height="1" fill="#000"/><rect x="2" y="5" width="8" height="1" fill="#fff"/><rect x="10" y="5" width="1" height="1" fill="#e3e3e3"/><rect x="11" y="5" width="1" height="1" fill="#fff"/><rect x="0" y="6" width="1" height="1" fill="#808080"/><rect x="1" y="6" width="1" height="1" fill="#000"/><rect x="2" y="6" width="8" height="1" fill="#fff"/><rect x="10" y="6" width="1" height="1" fill="#e3e3e3"/><rect x="11" y="6" width="1" height="1" fill="#fff"/><rect x="0" y="7" width="1" height="1" fill="#808080"/><rect x="1" y="7" width="1" height="1" fill="#000"/><rect x="2" y="7" width="8" height="1" fill="#fff"/><rect x="10" y="7" width="1" height="1" fill="#e3e3e3"/><rect x="11" y="7" width="1" height="1" fill="#fff"/><rect x="1" y="8" width="1" height="1" fill="#808080"/><rect x="2" y="8" width="1" height="1" fill="#000"/><rect x="3" y="8" width="6" height="1" fill="#fff"/><rect x="9" y="8" width="1" height="1" fill="#e3e3e3"/><rect x="10" y="8" width="1" height="1" fill="#fff"/><rect x="1" y="9" width="1" height="1" fill="#808080"/><rect x="2" y="9" width="2" height="1" fill="#e3e3e3"/><rect x="4" y="9" width="4" height="1" fill="#fff"/><rect x="8" y="9" width="2" height="1" fill="#e3e3e3"/><rect x="10" y="9" width="1" height="1" fill="#fff"/><rect x="2" y="10" width="2" height="1" fill="#fff"/><rect x="4" y="10" width="4" height="1" fill="#e3e3e3"/><rect x="8" y="10" width="2" height="1" fill="#fff"/><rect x="4" y="11" width="4" height="1" fill="#fff"/></svg>
<div class="btn" style="left:635px;top:510px;width:27px;height:25px;line-height:22px">Tx<u>6</u></div>
<!-- status bar -->
<div class="a" style="left:2px;top:558px;width:666px;height:2px;background:#fff"></div>
<div class="sp" style="left:5px;width:83px"></div>
<div class="t" style="left:13px;top:544px;letter-spacing:-0.15px">1.0000 1.0000</div>
<div class="sp" style="left:89px;width:44px;background:#ff0000"></div>
<div class="t" style="left:96px;top:544px">JT65A</div>
<div class="sp" style="left:135px;width:82px"></div>
<div class="t" style="left:141px;top:544px;letter-spacing:-0.15px">Freeze DF:  67</div>
<div class="sp" style="left:219px;width:86px"></div>
<div class="t" style="left:225px;top:544px;letter-spacing:-0.15px">Rx noise:  0 dB</div>
<div class="sp" style="left:307px;width:89px"></div>
<div class="t" style="left:313px;top:544px;letter-spacing:-0.15px">T/R Period: 60 s</div>
<div class="a" style="left:601px;top:538px;width:63px;height:21px;border:1px solid #a0a0a0;border-right-color:#fff;border-bottom-color:#fff;background:#66ffff"></div>
<div class="t" style="left:607px;top:544px;letter-spacing:-0.1px">Txing:  RO</div>
</body></html>
